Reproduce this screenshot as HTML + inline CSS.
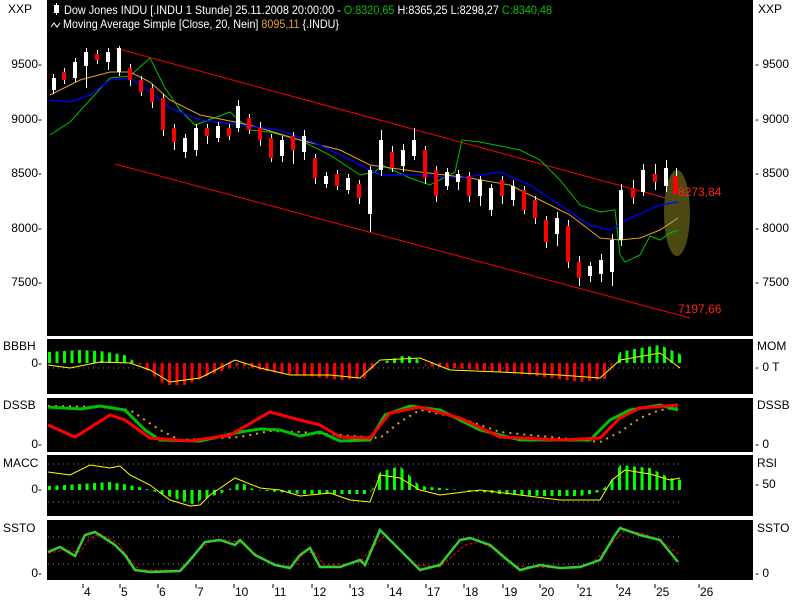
<!DOCTYPE html><html><head><meta charset="utf-8"><style>
html,body{margin:0;padding:0;background:#fff;width:800px;height:600px;overflow:hidden}
svg{display:block;font-family:"Liberation Sans",sans-serif}
</style></head><body>
<svg width="800" height="600" xmlns="http://www.w3.org/2000/svg">
<defs>
<pattern id="pg" x="48" width="7.5" height="10" patternUnits="userSpaceOnUse"><rect x="0" y="0" width="3" height="10" fill="#00ff00"/></pattern>
<pattern id="pr" x="48" width="7.5" height="10" patternUnits="userSpaceOnUse"><rect x="0" y="0" width="3" height="10" fill="#ff0000"/></pattern>
</defs>
<rect width="800" height="600" fill="#fff"/>
<rect x="47" y="0" width="706" height="336" fill="#000"/>
<rect x="47" y="339" width="706" height="55" fill="#000"/>
<rect x="47" y="398" width="706" height="54" fill="#000"/>
<rect x="47" y="455" width="706" height="61" fill="#000"/>
<rect x="47" y="520" width="706" height="60" fill="#000"/>
<g font-size="12" fill="#000">
<text x="8" y="13">XXP</text><text x="758" y="13">XXP</text>
<text x="42" y="68" text-anchor="end">9500-</text><text x="42" y="123" text-anchor="end">9000-</text><text x="42" y="177" text-anchor="end">8500-</text><text x="42" y="232" text-anchor="end">8000-</text><text x="42" y="286" text-anchor="end">7500-</text>
<text x="755" y="68">- 9500</text><text x="755" y="123">- 9000</text><text x="755" y="177">- 8500</text><text x="755" y="232">- 8000</text><text x="755" y="286">- 7500</text>
<text x="3" y="350">BBBH</text><text x="42" y="367" text-anchor="end">0-</text>
<text x="757" y="350">MOM</text><text x="755" y="371">- 0 T</text>
<text x="3" y="409">DSSB</text><text x="42" y="448" text-anchor="end">0-</text>
<text x="757" y="409">DSSB</text><text x="755" y="448">- 0</text>
<text x="3" y="467">MACC</text><text x="42" y="493" text-anchor="end">0-</text>
<text x="757" y="467">RSI</text><text x="755" y="488">- 50</text>
<text x="3" y="532">SSTO</text><text x="42" y="577" text-anchor="end">0-</text>
<text x="757" y="532">SSTO</text><text x="755" y="577">- 0</text>
</g>
<g font-size="12" fill="#000">
<text x="84" y="596">4</text><text x="121" y="596">5</text><text x="159" y="596">6</text><text x="197" y="596">7</text><text x="235" y="596">10</text><text x="274" y="596">11</text><text x="313" y="596">12</text><text x="351" y="596">13</text><text x="389" y="596">14</text><text x="427" y="596">17</text><text x="465" y="596">18</text><text x="504" y="596">19</text><text x="541" y="596">20</text><text x="579" y="596">21</text><text x="618" y="596">24</text><text x="656" y="596">25</text><text x="700" y="596">26</text>
<path d="M83 584v4M120 584v4M158 584v4M196 584v4M234 584v4M273 584v4M312 584v4M350 584v4M388 584v4M426 584v4M464 584v4M503 584v4M540 584v4M578 584v4M617 584v4M655 584v4M699 584v4" stroke="#000"/>
</g>
<rect x="54" y="5" width="5" height="8" fill="#fff"/><path d="M56.5 3v12" stroke="#fff"/>
<text x="64" y="14" font-size="12" fill="#fff" textLength="488" lengthAdjust="spacingAndGlyphs">Dow Jones INDU [.INDU  1 Stunde] 25.11.2008 20:00:00 - <tspan fill="#00c000">O:8320,65</tspan> H:8365,25 L:8298,27 <tspan fill="#00c000">C:8340,48</tspan></text>
<path d="M51 27l3-4 3 4 3-4" stroke="#fff" fill="none"/>
<text x="63" y="28" font-size="12" fill="#fff" textLength="276" lengthAdjust="spacingAndGlyphs">Moving Average Simple [Close, 20, Nein] <tspan fill="#e0a030">8095,11</tspan> {.INDU}</text>
<path d="M115 48L688 204M115 164L690 318" stroke="#ff0000" stroke-width="1"/>
<ellipse cx="677" cy="213" rx="13" ry="43" fill="#4a4a12"/>
<polyline fill="none" stroke="#00c000" points="50,135 70,122 90,100 110,78 130,76 150,58 165,88 180,110 195,125 230,112 250,130 270,132 300,140 330,155 360,175 375,172 382,165 410,178 430,185 455,172 462,140 480,142 520,150 540,160 560,180 580,205 600,212 615,210 620,255 625,262 640,255 650,236 660,240 670,233 678,230"/>
<polyline fill="none" stroke="#e0a030" points="50,95 80,80 110,72 130,72 150,82 170,100 200,115 250,125 300,140 340,150 370,165 420,172 470,178 510,185 540,200 570,215 600,238 620,240 640,238 660,230 678,218"/>
<polyline fill="none" stroke="#0000ff" stroke-width="1.3" points="50,100 70,102 90,95 110,80 130,78 150,92 170,108 200,120 240,125 280,130 320,145 360,165 380,175 420,175 460,178 500,172 530,185 560,205 590,225 610,230 630,218 660,205 678,202"/>
<g stroke="#fff" stroke-width="1">
<path d="M53.5 74v20M64.5 68v16M75.5 58v24M86.5 48v40M97.5 50v14M108.5 48v22M119.5 46v30M130.5 64v22M141.5 76v20M152.5 84v24M163.5 94v42M174.5 124v26M185.5 134v24M196.5 124v32M207.5 124v20M218.5 122v20M229.5 124v16M238.5 100v32M249.5 114v20M260.5 122v24M271.5 134v28M282.5 136v26M293.5 132v32M304.5 130v30M315.5 154v30M326.5 172v16M337.5 170v20M348.5 174v20M359.5 180v24M370.5 166v66M381.5 130v46M392.5 146v26M403.5 144v28M414.5 128v32M425.5 146v38M436.5 166v36M447.5 168v22M458.5 170v20M469.5 172v30M480.5 176v30M491.5 184v32M502.5 176v28M513.5 180v26M524.5 186v28M535.5 196v28M546.5 216v32M557.5 212v34M568.5 220v48M579.5 256v30M590.5 262v20M601.5 254v28M612.5 234v52M621.5 184v62M633.5 180v24M643.5 164v32M655.5 164v26M666.5 160v32M676.5 168v26"/>
</g>
<g fill="#fff">
<rect x="52" y="78" width="4" height="12"/><rect x="73" y="62" width="4" height="16"/><rect x="84" y="52" width="4" height="14"/><rect x="106" y="52" width="4" height="10"/><rect x="117" y="48" width="4" height="24"/><rect x="183" y="138" width="4" height="14"/><rect x="194" y="128" width="4" height="22"/><rect x="216" y="126" width="4" height="12"/><rect x="236" y="106" width="4" height="22"/><rect x="280" y="140" width="4" height="16"/><rect x="302" y="136" width="4" height="16"/><rect x="324" y="176" width="4" height="8"/><rect x="346" y="178" width="4" height="12"/><rect x="368" y="170" width="4" height="44"/><rect x="379" y="140" width="4" height="30"/><rect x="401" y="150" width="4" height="16"/><rect x="412" y="140" width="4" height="16"/><rect x="445" y="172" width="4" height="14"/><rect x="456" y="174" width="4" height="8"/><rect x="478" y="180" width="4" height="16"/><rect x="489" y="188" width="4" height="22"/><rect x="511" y="186" width="4" height="14"/><rect x="555" y="218" width="4" height="16"/><rect x="588" y="266" width="4" height="10"/><rect x="599" y="260" width="4" height="14"/><rect x="610" y="240" width="4" height="32"/><rect x="619" y="190" width="4" height="50"/><rect x="641" y="170" width="4" height="22"/><rect x="664" y="168" width="4" height="18"/>
</g>
<g fill="#ff0000">
<rect x="62" y="72" width="4" height="8"/><rect x="95" y="54" width="4" height="6"/><rect x="128" y="68" width="4" height="12"/><rect x="139" y="80" width="4" height="12"/><rect x="150" y="88" width="4" height="14"/><rect x="161" y="98" width="4" height="32"/><rect x="172" y="128" width="4" height="14"/><rect x="205" y="128" width="4" height="8"/><rect x="227" y="128" width="4" height="8"/><rect x="247" y="118" width="4" height="12"/><rect x="258" y="128" width="4" height="12"/><rect x="269" y="138" width="4" height="20"/><rect x="291" y="136" width="4" height="14"/><rect x="313" y="158" width="4" height="20"/><rect x="335" y="174" width="4" height="12"/><rect x="357" y="184" width="4" height="14"/><rect x="390" y="152" width="4" height="16"/><rect x="423" y="150" width="4" height="28"/><rect x="434" y="170" width="4" height="26"/><rect x="467" y="176" width="4" height="20"/><rect x="500" y="180" width="4" height="16"/><rect x="522" y="190" width="4" height="20"/><rect x="533" y="200" width="4" height="18"/><rect x="544" y="220" width="4" height="22"/><rect x="566" y="226" width="4" height="36"/><rect x="577" y="262" width="4" height="16"/><rect x="631" y="188" width="4" height="10"/><rect x="653" y="174" width="4" height="8"/><rect x="673" y="176" width="5" height="18"/>
</g>
<text x="678" y="196" font-size="12" fill="#ff2020">8273,84</text>
<text x="678" y="313" font-size="12" fill="#ff2020">7197,66</text>
<path d="M48 368H680" stroke="#888" stroke-dasharray="1,4"/>
<polygon fill="url(#pg)" points="48,363 48,352 80,350 100,351 125,355 135,362 135,363"/>
<polygon fill="url(#pr)" points="138,363 140,365 165,385 185,385 210,375 240,365 270,372 300,375 340,380 365,378 375,365 376,363"/>
<polygon fill="url(#pg)" points="380,363 405,355 420,360 422,363"/>
<polygon fill="url(#pr)" points="425,363 425,366 480,370 530,375 580,382 610,378 612,363"/>
<polygon fill="url(#pg)" points="613,363 620,352 640,348 660,345 682,355 682,363"/>
<polyline fill="none" stroke="#ffff00" points="48,365 70,368 80,366 100,362 130,363 150,370 170,382 200,378 235,360 260,368 290,375 330,375 360,378 380,360 420,358 450,370 500,372 560,375 600,378 620,360 660,353 672,362 680,368"/>
<polyline fill="none" stroke="#e0a030" stroke-width="2" stroke-dasharray="2,5" points="48,406 100,407 130,410 160,430 180,440 240,437 270,431 300,432 340,435 380,438 400,422 420,410 460,418 500,432 560,438 600,442 620,432 640,418 660,410 678,408"/>
<polyline fill="none" stroke="#00c000" stroke-width="3" points="48,407 80,409 100,406 125,410 145,430 160,440 200,441 240,432 260,429 280,430 300,436 320,432 340,441 370,440 385,415 410,406 440,410 480,430 520,440 590,440 610,420 630,410 660,405 678,410"/>
<polyline fill="none" stroke="#ff0000" stroke-width="3" points="48,425 75,437 110,415 125,420 150,438 190,441 230,435 270,412 300,420 320,425 340,437 370,438 390,413 420,407 460,418 500,437 560,440 600,438 620,418 640,408 678,405"/>
<path d="M48 464H680M48 502H680" stroke="#888" stroke-dasharray="1,4"/>
<polygon fill="url(#pg)" points="48,486 80,484 110,482 135,486 150,490 180,500 195,505 200,500 225,492 240,482 255,490 300,494 340,494 370,494 380,472 400,466 420,486 500,494 540,496 580,496 600,492 612,480 620,465 650,468 670,478 682,480 682,490 48,490"/>
<polyline fill="none" stroke="#ffff00" points="48,472 70,475 90,465 110,468 120,466 130,475 150,485 170,500 190,506 200,505 210,495 235,478 260,488 280,490 300,496 330,493 350,500 370,502 380,475 400,478 420,490 440,495 480,490 520,495 560,500 600,500 612,480 625,470 650,474 670,480 680,478"/>
<path d="M48 537H680M48 564H680" stroke="#888" stroke-dasharray="1,4"/>
<polyline fill="none" stroke="#ff0000" stroke-dasharray="3,2" points="48,553 65,550 80,552 90,538 100,534 118,543 130,560 140,570 180,570 195,553 210,542 225,540 240,542 260,557 280,566 295,566 305,552 315,553 325,566 360,562 370,550 385,535 400,550 415,565 440,567 465,545 480,542 500,552 515,566 560,568 590,565 610,545 625,530 645,534 665,544 680,555"/>
<polyline fill="none" stroke="#30d030" stroke-width="2.5" points="48,552 60,547 75,556 85,535 95,532 115,545 125,555 135,570 150,572 180,571 190,560 205,542 220,540 235,545 240,540 255,555 275,565 290,568 300,555 310,548 320,567 340,567 360,560 365,565 380,530 395,545 410,560 420,570 440,565 460,540 470,538 490,545 505,558 520,570 540,565 560,568 580,567 600,560 615,535 620,528 640,535 660,540 678,562"/>
</svg>
</body></html>
